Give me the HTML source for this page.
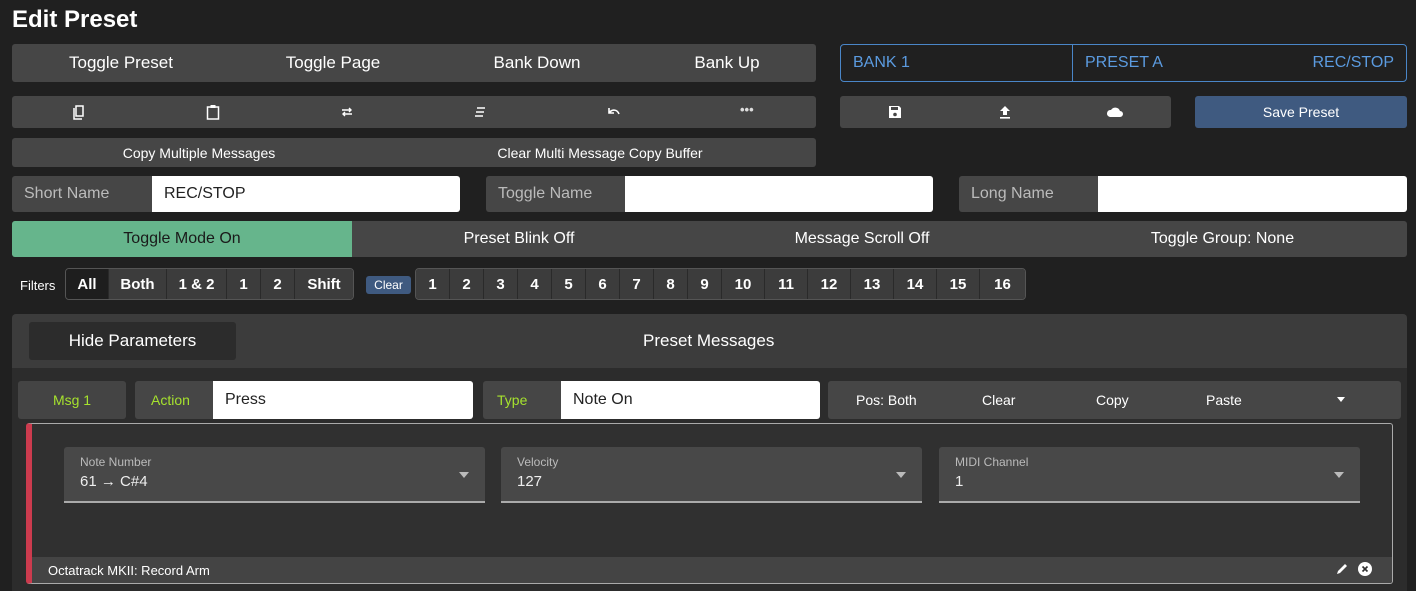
<!DOCTYPE html>
<html><head><meta charset="utf-8"><style>
*{box-sizing:border-box;margin:0;padding:0}
html,body{width:1416px;height:591px;overflow:hidden}
body{background:#202020;font-family:"Liberation Sans",sans-serif;color:#fff;position:relative}
.a{position:absolute}
.btn{background:#464646;border-radius:3px;display:flex;align-items:center}
.c{display:flex;align-items:center;justify-content:center}
.inp{position:absolute;display:flex;height:36px;border-radius:3px;overflow:hidden}
.inp .l{background:#464646;color:#bbb;font-size:16px;display:flex;align-items:center;padding-left:12px}
.inp .v{background:#fff;color:#222;font-size:16px;flex:1;display:flex;align-items:center;padding-left:12px}
.seg{display:flex;border:1px solid #555;border-radius:4px;overflow:hidden;height:32px}
.seg div{background:#3c3c3c;border-right:1px solid #2a2a2a;font-size:15px;font-weight:bold;display:flex;align-items:center;justify-content:center}
.fld{position:absolute;top:447px;height:56px;background:#484848;border-bottom:2px solid #aaa;border-radius:3px 3px 0 0}
.fld .lb{position:absolute;left:16px;top:8px;font-size:12px;color:#bbb}
.fld .vl{position:absolute;left:16px;top:26px;font-size:15px;color:#eee}
.fld .ar{position:absolute;right:16px;top:25px;width:0;height:0;border-left:5px solid transparent;border-right:5px solid transparent;border-top:6px solid #bbb}
</style></head><body>
<div class="a" style="left:12px;top:6px;font-size:24px;font-weight:bold">Edit Preset</div>

<div class="a btn" style="left:12px;top:44px;width:804px;height:38px;font-size:17px">
<div class="c" style="width:218px">Toggle Preset</div><div class="c" style="width:206px">Toggle Page</div><div class="c" style="width:202px">Bank Down</div><div class="c" style="width:178px">Bank Up</div></div>

<div class="a" style="left:840px;top:44px;width:567px;height:38px;border:1px solid #4a86c8;border-radius:4px;color:#5b9be0;font-size:16px">
<div class="a" style="left:12px;top:9px">BANK 1</div>
<div class="a" style="left:231px;top:0;width:1px;height:36px;background:#4a86c8"></div>
<div class="a" style="left:244px;top:9px">PRESET A</div>
<div class="a" style="right:12px;top:9px">REC/STOP</div></div>

<div class="a btn" style="left:12px;top:96px;width:804px;height:32px;font-size:13px;color:#ddd">
<svg class="a" style="left:60px;top:9px" width="14" height="15" viewBox="0 0 14 15"><path d="M2 3v11h8M4 1h7v10H4z" fill="none" stroke="#fff" stroke-width="1.5"/></svg>
<svg class="a" style="left:194px;top:8px" width="14" height="16" viewBox="0 0 14 16"><rect x="1.5" y="3" width="11" height="12" fill="none" stroke="#fff" stroke-width="1.5"/><rect x="4.5" y="1" width="5" height="3" fill="#fff"/></svg>
<svg class="a" style="left:329px;top:10px" width="12" height="12" viewBox="0 0 12 12"><path d="M1 4h9M8 2l2 2-2 2M11 8H2M4 6L2 8l2 2" fill="none" stroke="#fff" stroke-width="1.4"/></svg>
<svg class="a" style="left:462px;top:11px" width="12" height="10" viewBox="0 0 12 10"><path d="M3 1h8M2 5h8M1 9h8" stroke="#fff" stroke-width="1.4"/></svg>
<svg class="a" style="left:595px;top:10px" width="14" height="12" viewBox="0 0 14 12"><path d="M2 2v5h5M2 7c3-4 8-4 10 1" fill="none" stroke="#fff" stroke-width="1.6"/></svg>
<div class="a" style="left:728px;top:6px;font-size:13px;font-weight:bold">•••</div>
</div>

<div class="a btn" style="left:840px;top:96px;width:331px;height:32px">
<svg class="a" style="left:48px;top:9px" width="14" height="14" viewBox="0 0 14 14"><path d="M1 1h10l2 2v10H1z" fill="#fff"/><rect x="3" y="2" width="7" height="3" fill="#464646"/><circle cx="7" cy="9.5" r="1.8" fill="#464646"/></svg>
<svg class="a" style="left:159px;top:9px" width="12" height="14" viewBox="0 0 12 14"><path d="M6 1l5 5H8v4H4V6H1z" fill="#fff"/><rect x="1" y="12" width="10" height="1.6" fill="#fff"/></svg>
<svg class="a" style="left:266px;top:10px" width="17" height="12" viewBox="0 0 17 12"><path d="M4 11h10a3 3 0 0 0 0-6 5 5 0 0 0-9-1 3.5 3.5 0 0 0-1 7z" fill="#fff"/></svg>
</div>
<div class="a btn c" style="left:1195px;top:96px;width:212px;height:32px;background:#3f5a80;font-size:14px;justify-content:center">Save Preset</div>

<div class="a btn" style="left:12px;top:138px;width:804px;height:29px;font-size:14px">
<div class="c" style="width:374px">Copy Multiple Messages</div><div class="c" style="width:428px">Clear Multi Message Copy Buffer</div></div>

<div class="inp" style="left:12px;top:176px;width:448px"><div class="l" style="width:140px">Short Name</div><div class="v">REC/STOP</div></div>
<div class="inp" style="left:486px;top:176px;width:447px"><div class="l" style="width:139px">Toggle Name</div><div class="v"></div></div>
<div class="inp" style="left:959px;top:176px;width:448px"><div class="l" style="width:139px">Long Name</div><div class="v"></div></div>

<div class="a" style="left:12px;top:221px;width:1395px;height:36px;display:flex;background:#464646;border-radius:3px;overflow:hidden;font-size:16px">
<div class="c" style="width:340px;background:#66b58c;color:#1a1a1a">Toggle Mode On</div>
<div class="c" style="width:334px">Preset Blink Off</div>
<div class="c" style="width:352px">Message Scroll Off</div>
<div class="c" style="width:369px">Toggle Group: None</div></div>

<div class="a" style="left:20px;top:278px;font-size:13px">Filters</div>
<div class="a seg" style="left:65px;top:268px">
<div style="width:43px;background:#1e1e1e">All</div><div style="width:58px">Both</div><div style="width:60px">1 &amp; 2</div><div style="width:34px">1</div><div style="width:34px">2</div><div style="width:58px;border-right:0">Shift</div></div>
<div class="a c" style="left:366px;top:276px;width:45px;height:18px;background:#3f5a80;border-radius:3px;font-size:12px">Clear</div>
<div class="a seg" style="left:415px;top:268px">
<div style="width:34px">1</div><div style="width:34px">2</div><div style="width:34px">3</div><div style="width:34px">4</div><div style="width:34px">5</div><div style="width:34px">6</div><div style="width:34px">7</div><div style="width:34px">8</div><div style="width:34px">9</div><div style="width:43px">10</div><div style="width:43px">11</div><div style="width:43px">12</div><div style="width:43px">13</div><div style="width:43px">14</div><div style="width:43px">15</div><div style="width:45px;border-right:0">16</div></div>

<div class="a" style="left:12px;top:314px;width:1395px;height:277px;background:#2c2c2c;border-radius:4px 4px 0 0;overflow:hidden">
<div class="a" style="left:0;top:0;width:1395px;height:54px;background:#3c3c3c"></div>
<div class="a c" style="left:17px;top:8px;width:207px;height:38px;background:#2c2c2c;border-radius:3px;font-size:17px">Hide Parameters</div>
<div class="a" style="left:631px;top:17px;font-size:17px">Preset Messages</div>
</div>

<div class="a c" style="left:18px;top:381px;width:108px;height:38px;background:#444;border-radius:3px;color:#a6e22e;font-size:14px">Msg 1</div>
<div class="inp" style="left:135px;top:381px;width:338px;height:38px"><div class="l" style="width:78px;color:#a6e22e;font-size:14px;padding-left:16px">Action</div><div class="v">Press</div></div>
<div class="inp" style="left:483px;top:381px;width:337px;height:38px"><div class="l" style="width:78px;color:#a6e22e;font-size:14px;padding-left:14px">Type</div><div class="v">Note On</div></div>
<div class="a btn" style="left:828px;top:381px;width:573px;height:38px;font-size:14px">
<div class="a" style="left:28px;top:11px">Pos: Both</div><div class="a" style="left:154px;top:11px">Clear</div><div class="a" style="left:268px;top:11px">Copy</div><div class="a" style="left:378px;top:11px">Paste</div>
<div class="a" style="left:509px;top:16px;border-left:4px solid transparent;border-right:4px solid transparent;border-top:5px solid #fff"></div></div>

<div class="a" style="left:26px;top:423px;width:1367px;height:161px;background:#303030;border:1px solid #aaa;border-left:6px solid #cc3b4e;border-radius:3px;overflow:hidden">
<div class="a" style="left:0;top:133px;width:1361px;height:26px;background:#444"></div>
<div class="a" style="left:16px;top:139px;font-size:13px">Octatrack MKII: Record Arm</div>
<svg class="a" style="left:1303px;top:138px" width="14" height="14" viewBox="0 0 14 14"><path d="M2 12l1-3 7-7 2 2-7 7z" fill="#fff"/></svg>
<svg class="a" style="left:1326px;top:138px" width="14" height="14" viewBox="0 0 14 14"><circle cx="7" cy="7" r="7" fill="#fff"/><path d="M4.5 4.5l5 5M9.5 4.5l-5 5" stroke="#303030" stroke-width="1.6"/></svg>
</div>
<div class="fld" style="left:64px;width:421px"><div class="lb">Note Number</div><div class="vl">61 → C#4</div><div class="ar"></div></div>
<div class="fld" style="left:501px;width:421px"><div class="lb">Velocity</div><div class="vl">127</div><div class="ar"></div></div>
<div class="fld" style="left:939px;width:421px"><div class="lb">MIDI Channel</div><div class="vl">1</div><div class="ar"></div></div>
</body></html>
